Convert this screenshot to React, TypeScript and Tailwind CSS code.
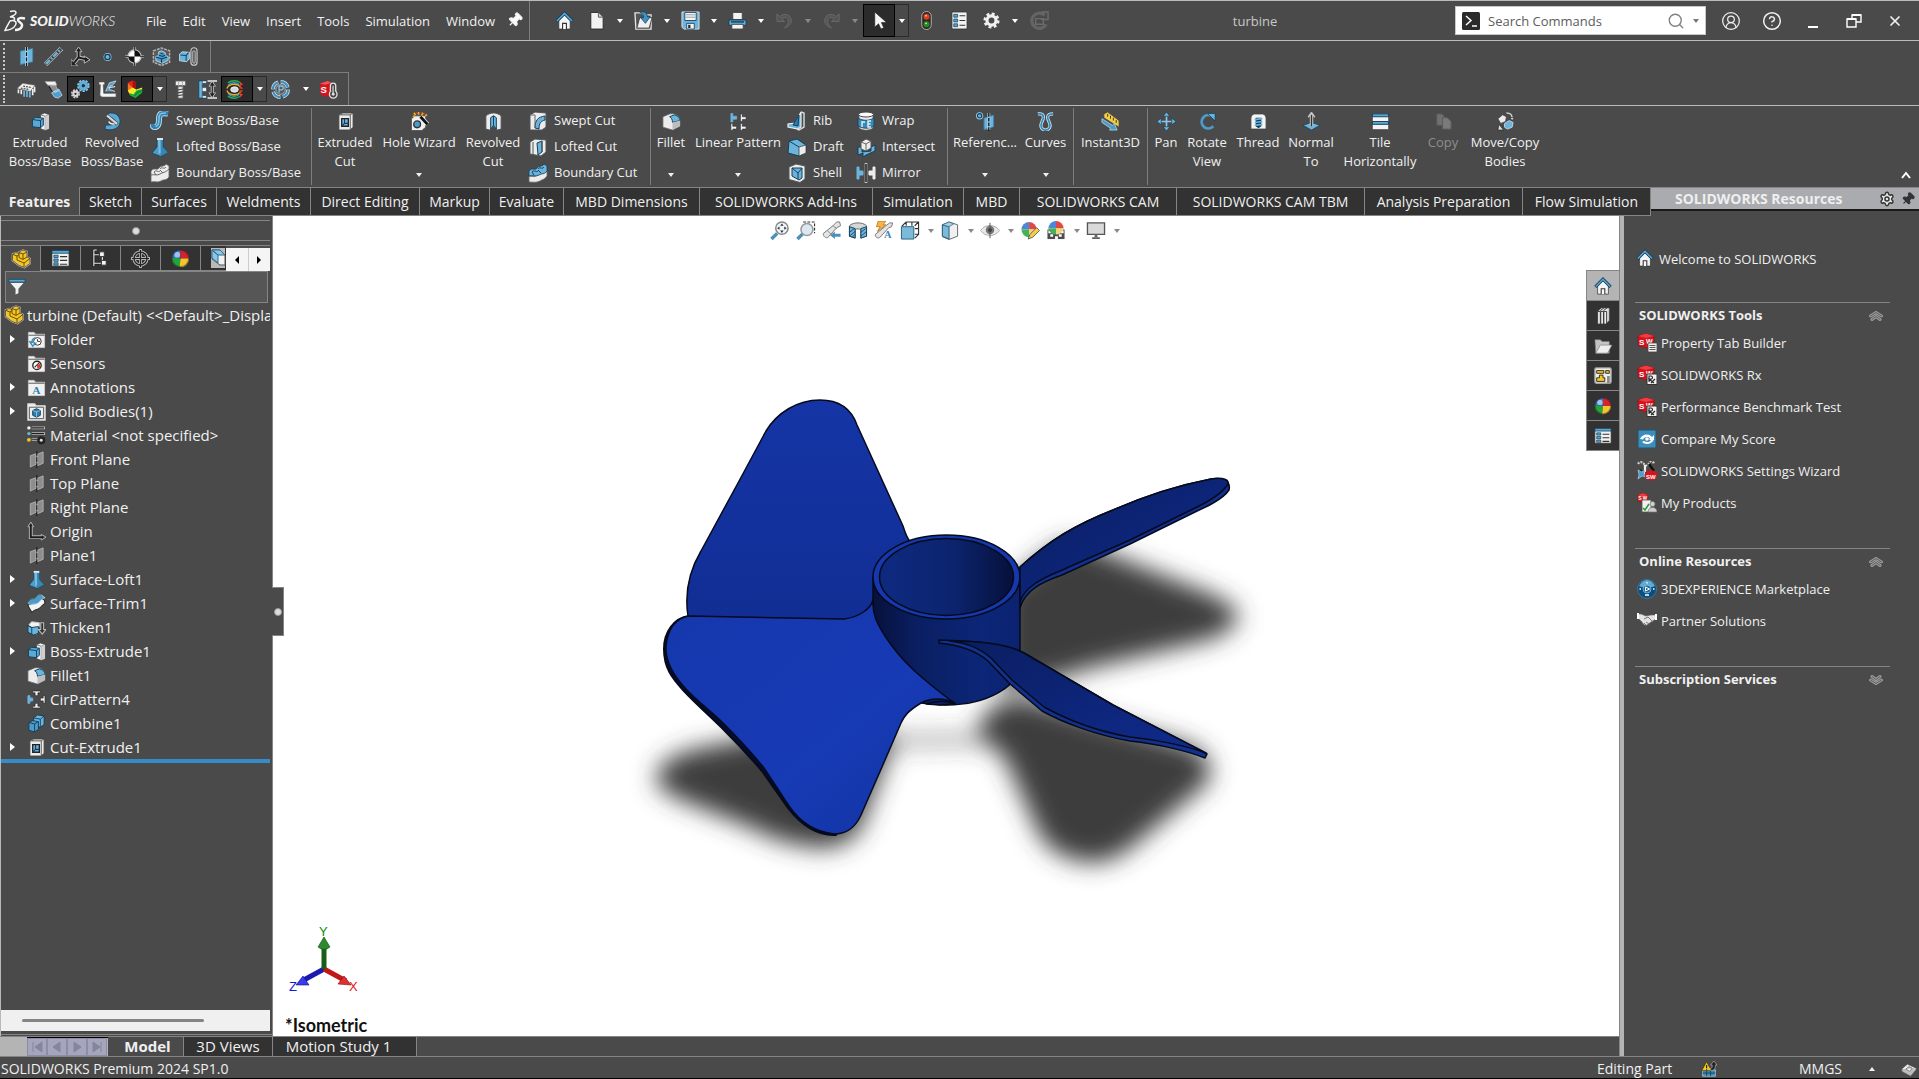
import React, { useState } from 'react';
import { clsx } from 'clsx';
import { Pin, Settings, Search, CircleUserRound, CircleHelp, X } from 'lucide-react';

const B = '#6db4dc';
const D = '#1d5b82';
const W = '#ececec';

/* Small drawings, all on a 20 x 20 grid */
const icons: Record<string, React.ReactNode> = {
  home: (
    <>
      <path d="M4 10v9h12v-9l-6-6z" fill="#f4f4f4" stroke="#333" strokeWidth=".8" />
      <path d="M8 19v-6h4v6" fill="#fff" stroke="#333" strokeWidth="1.2" />
      <path d="M1.5 11 10 2.5l8.500 8.500" fill="none" stroke="#123f5c" strokeWidth="3.400" />
      <path d="M2 10.500 10 2.500l8 8" fill="none" stroke="#5fa8d3" strokeWidth="1.600" />
    </>
  ),
  newDoc: (
    <>
      <path d="M4 1.500h8l5 5V19H4z" fill="#f2f2f2" stroke="#2b2b2b" />
      <path d="M12 1.500v5h5" fill="#cfcfcf" stroke="#555" />
    </>
  ),
  open: (
    <>
      <path d="M1 2h7l2 2h8v15H2z" fill="#555" stroke="#e4e4e4" strokeWidth="1.400" />
      <path d="m3 18 3-11h13l-3 11z" fill="#f0f0f0" stroke="#444" />
      <path d="M6 1c5-1 8 1 8 5h3l-5 7-5-6h3c0-3-1-4-4-6z" fill="#3f93c1" stroke="#123f5c" strokeWidth=".8" />
    </>
  ),
  save: (
    <>
      <path d="M1 1h18v18H3l-2-2z" fill="#6db4dc" stroke="#e0e0e0" />
      <path d="M4 1.500h12V10H4z" fill="#f4f4f4" stroke="#1d4f70" />
      <path d="M5 4h10M5 6.500h10" stroke="#999" />
      <path d="M6 13h8v6H6z" fill="#f4f4f4" stroke="#1d4f70" />
      <path d="M7.500 14.500h2.500V18H7.500z" fill="#333" />
    </>
  ),
  print: (
    <>
      <path d="M5 1.500h10V9H5z" fill="#f4f4f4" stroke="#444" />
      <path d="M1 9.500h18V15H1z" fill="#69b1da" stroke="#123f5c" />
      <path d="M3 11.500h14" stroke="#123f5c" strokeWidth="1.500" />
      <path d="M4 14h12v5H4z" fill="#f4f4f4" stroke="#444" />
    </>
  ),
  undo: <path d="M2 3v8h8L7 8c4-3 8 0 7 4-.3 2-2 4-4 6 5-2 8-5 7-9C16 3 9 2 5 6z" fill="#555" stroke="#6d6d6d" strokeWidth=".9" />,
  redo: <path d="M18 3v8h-8l3-3c-4-3-8 0-7 4 .3 2 2 4 4 6-5-2-8-5-7-9C4 3 11 2 15 6z" fill="#555" stroke="#6d6d6d" strokeWidth=".9" />,
  cursor: <path d="M5 1v16l4-3.500 2.500 5.500 3-1.300-2.500-5.500h5.500z" fill="#f7f7f7" stroke="#222" strokeWidth=".7" />,
  traffic: (
    <>
      <rect x="5" y="0.500" width="10" height="19" rx="5" fill="#2a2a2a" stroke="#b5b5b5" />
      <circle cx="10" cy="6" r="3.200" fill="#e23b1a" />
      <circle cx="9.500" cy="5" r="1" fill="#ffb9a5" />
      <circle cx="10" cy="14" r="3.200" fill="#2b8a1d" />
      <circle cx="9.500" cy="13" r="1" fill="#b8ec9f" />
    </>
  ),
  list: (
    <>
      <path d="M2 1h16v18H2z" fill="#f2f2f2" stroke="#333" />
      <path d="M4 3.500h4v3H4zM4 8.500h4v3H4zM4 13.500h4v3H4z" fill="#5aa6d0" stroke="#123f5c" strokeWidth=".8" />
      <path d="M10 5h6M10 10h6M10 15h6" stroke="#333" strokeWidth="1.200" />
    </>
  ),
  props: (
    <>
      <path d="M1 3h18v15H1z" fill="#f2f2f2" stroke="#333" strokeWidth=".8" />
      <path d="M1 1.500h18v3H1z" fill="#5aa6d0" stroke="#123f5c" strokeWidth=".8" />
      <path d="M3 6.500h4.500v2.500H3zM3 10.500h4.500V13H3zM3 14.500h4.500V17H3z" fill="#5aa6d0" stroke="#123f5c" strokeWidth=".8" />
      <path d="M9.500 8H17M9.500 12H17M9.500 16H17" stroke="#333" strokeWidth="1.200" />
    </>
  ),
  gear: (
    <>
      <circle cx="10" cy="10" r="7" fill="none" stroke="#f0f0f0" strokeWidth="3" strokeDasharray="3 2.500" />
      <circle cx="10" cy="10" r="4.800" fill="none" stroke="#f0f0f0" strokeWidth="3.400" />
    </>
  ),
  rebuild: (
    <>
      <path d="M15.500 4.500A8 8 0 1 0 17 14" fill="none" stroke="#646464" strokeWidth="3.500" />
      <path d="M12 1h7v8h-7M6 8h8v6H6z" fill="none" stroke="#6b6b6b" strokeWidth="1.500" />
    </>
  ),
  plane: (
    <>
      <path d="M3.500 4.500 16.500 1.500v14l-13 3z" fill={B} stroke="#3d88b3" strokeWidth=".8" />
      <path d="M10 0v20" stroke="#9bd0ea" strokeWidth="3" />
      <path d="M10 0v20" stroke="#111" strokeWidth="1.200" strokeDasharray="4 1.500" />
    </>
  ),
  planeGray: (
    <>
      <path d="M3.500 6 9.500 4v11l-6 3zM11 4.500l6-2.500v12l-6 2.500z" fill="#8d8d8d" stroke="#c0c0c0" strokeWidth=".8" />
      <path d="M10.300 1v18" stroke="#222" strokeWidth="1.200" strokeDasharray="5 1.500" />
    </>
  ),
  axis: (
    <>
      <path d="M1.500 18.500 18.500 1.500" stroke="#bdbdbd" strokeWidth="5" />
      <path d="M1.500 18.500 18.500 1.500" stroke="#3b3b3b" strokeWidth="3.400" />
      <path d="M2 18 18 2" stroke={B} strokeWidth="2.400" strokeDasharray="6 1.500 2 1.500" />
    </>
  ),
  csys: (
    <>
      <path d="M8 2v9l9 2M8 11l-5 6" fill="none" stroke="#bdbdbd" strokeWidth="4" />
      <path d="m4.500 5 3.500-5 3.500 5zM14 9.500 20 13.500l-6 3.500zM0 13v7h7z" fill="#222" stroke="#bdbdbd" strokeWidth="1" />
      <path d="M8 3v8l8 2M8 11l-5 6" fill="none" stroke="#1b1b1b" strokeWidth="2" />
    </>
  ),
  point: (
    <>
      <circle cx="10" cy="10.500" r="3.300" fill={B} stroke="#9bd0ea" strokeWidth="1.800" />
      <circle cx="10" cy="10.500" r="2.800" fill={B} stroke="#103a54" strokeWidth="1.400" />
    </>
  ),
  com: (
    <>
      <path d="M10 0v20M0 10h20" stroke="#c4c4c4" strokeWidth="2.200" />
      <circle cx="10" cy="10" r="6.800" fill="#fff" stroke="#c4c4c4" strokeWidth="1.500" />
      <path d="M10 10V3.500A6.500 6.500 0 0 1 16.500 10zM10 10v6.500A6.500 6.500 0 0 1 3.500 10z" fill="#111" />
      <path d="M10 0v4M10 16v4M0 10h4M16 10h4" stroke="#222" strokeWidth=".9" />
    </>
  ),
  bbox: (
    <>
      <path d="M1.500 4 10 1l8.500 3v12L10 19.500 1.500 16z" fill="#5a5a5a" stroke="#b5b5b5" strokeWidth="1.500" strokeDasharray="3 1" />
      <path d="m4 10 3-1V5l3-1 4 2v3l3 1v4l-6 3-7-2.500z" fill="#4fa0cc" stroke="#cfe6f3" strokeWidth=".8" />
      <path d="m4 10.500 6 2v4M10 12.500l6-2M7 8.500l4 1.500 3-1.500M9 6.500l3 1" fill="none" stroke="#103a54" strokeWidth="1.100" />
    </>
  ),
  mate: (
    <>
      <path d="m.500 7.500 3-2.500 7.500.500v7L8 15.500l-7.500-1z" fill={B} stroke="#cfe6f3" strokeWidth=".8" />
      <path d="m1.500 8.500 6 .5L10 6M7.500 9v5.500" fill="none" stroke="#123f5c" strokeWidth="1.100" />
      <rect x="12.500" y=".8" width="6.500" height="18.400" rx="3.200" fill="none" stroke="#c8c8c8" strokeWidth="1.200" />
      <rect x="14.500" y="4" width="2.500" height="13" rx="1.200" fill="none" stroke="#c8c8c8" strokeWidth="1" />
    </>
  ),
  comb: (
    <>
      <path d="m0 9 6-5.500L19 5v6l-2 5-4 2-10-3z" fill="#4a4a4a" />
      <path d="m0 9 6-5.500L19 5.500 14 12z" fill="#f0f0f0" stroke="#666" strokeWidth=".6" />
      <path d="m4 8.500 9 1.500M6.500 6.500l9 1.500" stroke="#555" strokeWidth="1.400" strokeDasharray="2 1" />
      <path d="M1.500 10v4M4.500 10.500v4.500M16.500 9.500V16M18.500 7v6" stroke="#f0f0f0" strokeWidth="1.700" />
      <path d="M7.500 11v6.500M10.500 11.500V18M13.500 12v6.500" stroke={B} strokeWidth="1.800" />
    </>
  ),
  drill: (
    <>
      <path d="M1 1.500h11l1.500 4H4z" fill="#f1f1f1" stroke="#999" strokeWidth=".6" />
      <path d="m5 6.500 7-1 2.500 5L9 13z" fill="#8d8d8d" stroke="#ccc" strokeWidth=".7" />
      <path d="M5 6.500 9 13" stroke="#222" strokeWidth="1.500" />
      <path d="m8 13.500 7.500-4L19 16l-4 3-4-1z" fill="#4d9fcd" stroke="#cde3f0" strokeWidth=".8" />
      <path d="m11 13 5-2" stroke="#a9d7ee" strokeWidth="1.200" />
    </>
  ),
  cogs: (
    <>
      <circle cx="13" cy="6" r="5.700" fill="none" stroke="#8cc6e6" strokeWidth="1.800" strokeDasharray="2.400 1.180" />
      <circle cx="13" cy="6" r="3.500" fill="none" stroke="#5fb0dc" strokeWidth="3.600" />
      <circle cx="4.700" cy="14.500" r="4" fill="none" stroke="#d9d9d9" strokeWidth="1.500" strokeDasharray="2 1.140" />
      <circle cx="4.700" cy="14.500" r="2.300" fill="none" stroke="#d9d9d9" strokeWidth="2.200" />
    </>
  ),
  bracket: (
    <>
      <path d="M1 2h6v3H5.500l.5 9H19v4H4L2 16 2.500 5H1z" fill="#f4f4f4" stroke="#555" strokeWidth=".7" />
      <path d="m8 12 4-9 7-2-4 5h-2l-1 4 6 2" fill="#4d9fcd" stroke="#d5e8f3" strokeWidth=".8" />
      <path d="m11 8 7-1" stroke="#ddd" strokeWidth="1.200" />
    </>
  ),
  rainbow: (
    <>
      <path d="m3 3 5-2.500 3.500 1.500v6l-4 2-4.500-.5z" fill="#e8261c" />
      <path d="M3 3.500v7l1 3L8 11V8z" fill="#f7751c" />
      <path d="m8 1 3.500 1v6L8 10z" fill="#a80f12" />
      <path d="m3 11 5-3 4 2 6-2v4l-7 5-6-2z" fill="#fce72b" />
      <path d="m5 14 4 1 3-4 6-1.500v4L11 19l-6-3z" fill="#19b32c" />
      <path d="m10 17 3-4 5-2" fill="none" stroke="#0c7a58" strokeWidth="1.200" />
    </>
  ),
  bolt: (
    <>
      <path d="M4.500 1h11v5h-11z" fill="#f0f0f0" stroke="#555" />
      <path d="M8 1v5M12 1v5" stroke="#aaa" />
      <path d="M7.500 7h5v12h-5z" fill="#e8e8e8" stroke="#777" strokeWidth=".8" />
      <path d="m7 10.500 6-1M7 13.500l6-1M7 16.500l6-1" stroke="#444" strokeWidth="1.200" />
    </>
  ),
  dims: (
    <>
      <path d="M1 1h8v2.500H4.500V8H9v4H4.500v4.500H9V19H1z" fill="#f4f4f4" stroke="#123f5c" strokeWidth=".6" />
      <path d="M1 1h3.500v18H1z" fill={B} stroke="#123f5c" strokeWidth=".6" />
      <path d="M10 1h10M10 19h10" stroke="#c4c4c4" strokeWidth="2" />
      <path d="M15 2v16" stroke="#c4c4c4" strokeWidth="3.200" />
      <path d="m11.500 6.500 3.500-5 3.500 5zM11.500 13.500l3.500 5 3.500-5z" fill="#222" stroke="#c4c4c4" strokeWidth=".9" />
      <path d="M15 3v14" stroke="#222" strokeWidth="1.300" />
    </>
  ),
  flow: (
    <g fill="none" strokeWidth="1.400">
      <ellipse cx="10" cy="10" rx="4" ry="2.800" fill="#d9d9d9" stroke="#f2f2f2" strokeWidth="1" />
      <path d="M3 3c4-3 10-3 13 0" stroke="#2bb24a" />
      <path d="M3 6c3-4 9-4 12-1" stroke="#3a90d9" />
      <path d="M2 9c2-5 10-6 14-2" stroke="#e9b21c" />
      <path d="M3 17c4 3 10 3 13 0" stroke="#2bb24a" />
      <path d="M3 14c3 4 9 4 12 1" stroke="#3a90d9" />
      <path d="M2 11c2 5 10 6 14 2" stroke="#e9b21c" />
      <path d="M16 1.500 19 5l-3.500 1zM16 18.500l3-3.500-3.500-1zM16 5.500l3 4-4-.5zM16 14.500l3-4-4 .5z" fill="#e5401e" stroke="none" />
    </g>
  ),
  plm: (
    <>
      <circle cx="10" cy="10" r="8" fill="none" stroke="#cfe3ef" strokeWidth="3.800" strokeDasharray="10 2.560" />
      <circle cx="10" cy="10" r="8" fill="none" stroke="#3f8fbf" strokeWidth="2.200" strokeDasharray="10 2.560" />
      <path d="M10 10m-5 0a5 5 0 1 0 10 0a5 5 0 1 0-10 0" fill="#5a5a5a" stroke="#b9d7e8" strokeWidth=".8" />
      <path d="M8.500 13.500v-7h2.500a1.800 1.800 0 0 1 0 3.800H8.500" fill="none" stroke="#8cc6e6" strokeWidth="1.300" />
    </>
  ),
  swPump: (
    <>
      <path d="m1 4 8-3 4 2v13l-5 2-7-3z" fill="#d3141c" />
      <path d="m1 4 8-3 4 2-6 2z" fill="#f0555b" />
      <text x="1.500" y="13.500" fontSize="10" fontWeight="bold" fill="#fff" fontFamily="Liberation Sans">S</text>
      <circle cx="15" cy="15" r="4" fill="#444" stroke="#e2e2e2" strokeWidth="1.400" />
      <path d="M12 12V6a2.800 2.800 0 0 1 5.600 0v6" fill="#444" stroke="#e2e2e2" strokeWidth="1.400" />
      <path d="M14.800 6v9" stroke="#e2e2e2" strokeWidth="1.200" />
      <circle cx="15" cy="15" r="1.500" fill="#e2e2e2" />
    </>
  ),
  extrude: (
    <>
      <path d="m10 3 4-2 5 1.500v15l-4 2-5-2z" fill="#f6f6f6" stroke="#444" strokeWidth=".8" />
      <path d="M15 4.500v14.500M10 3l5 1.500 4-2" fill="none" stroke="#555" strokeWidth=".8" />
      <path d="M15 4.500 19 2.500v15l-4 1.500z" fill="#cfcfcf" />
      <path d="m1.500 8 3.500-2.500 8 1V14l-3 2.500-8.500-1z" fill="#5ba8d2" stroke="#123f5c" />
      <path d="m1.500 8 8.500 1 3-2.500M10 9v7.500" fill="none" stroke="#123f5c" />
    </>
  ),
  revolve: (
    <>
      <path d="M5 1.500c7-2 13 2 13 8.500 0 7-8 10.500-16 8 0-2 .5-3 1.500-4.500 5 1 9-.5 9-3.500 0-2.500-3-4.500-7-4z" fill="#5ba8d2" stroke="#123f5c" strokeWidth=".9" />
      <path d="M3 4.500 5 2.500l11 9-2 2.500z" fill="#d6d6d6" stroke="#444" strokeWidth=".8" />
      <path d="M6 10c1 2 3 3 6 2.500" fill="none" stroke="#eee" strokeWidth="1.600" />
    </>
  ),
  sweep: (
    <>
      <path d="M18 2.500c-7-1-9 0-9 6 0 5-1 7-3.500 7.500-2 .3-3-1-3-3" fill="none" stroke="#bfe0f1" strokeWidth="6" />
      <path d="M18 2.500c-7-1-9 0-9 6 0 5-1 7-3.500 7.500-2 .3-3-1-3-3" fill="none" stroke="#2f81b0" strokeWidth="4.200" />
      <path d="M16 2c-6 0-7 1-7 6 0 5-1 7-3.500 7.500" fill="none" stroke="#7fc0e2" strokeWidth="1.600" />
    </>
  ),
  loft: (
    <>
      <path d="M7 2h6v8l5 5.500L10.500 19.500 2 16l5-6z" fill="#4b9cc9" stroke="#123f5c" strokeWidth=".8" />
      <path d="M13 3v7l5 5.500L10.500 19.500V3z" fill="#2f7fae" opacity=".7" />
      <path d="M8 3h2.500l.2 13-2 1z" fill="#86c3e3" opacity=".8" />
      <path d="M7 1h6v2H7z" fill="#e4e4e4" />
    </>
  ),
  boundary: (
    <>
      <path d="M1 8c3-4 6 0 8-3s6-1 7-4l3 2v11c-3 4-5 2-8 4-4 2-6 0-10 1z" fill={W} stroke="#666" strokeWidth=".8" />
      <path d="M1 12c4-1 6 1 9-1s5-1 9-5M4 9c2-3 4 1 6-1M10 6c2-3 4 1 6-2M6 12l-2-3M13 10l-3-3" fill="none" stroke="#666" strokeWidth="1" />
    </>
  ),
  boundaryCut: (
    <>
      <path d="M1 13c3 0 6 1 9-1s6-2 9-4v5c-3 4-4 3-7 5-4 2-7 1-11 1z" fill={W} stroke="#666" strokeWidth=".8" />
      <path d="M1 8c3-4 6 0 8-3s6-1 7-4l3 2v5c-3 4-5 2-8 4-4 2-6 0-10 1z" fill={B} stroke="#123f5c" strokeWidth=".8" />
      <path d="M4 9c2-3 4 1 6-1M10 6c2-3 4 1 6-2M6 12l-2-3M13 10l-3-3" stroke="#123f5c" fill="none" />
    </>
  ),
  extrudeCut: (
    <>
      <path d="m3 3 3-2h12v15l-3 3H3z" fill={W} stroke="#444" />
      <path d="M6 1v2M15 3l3-2M3 3h12v16" fill="none" stroke="#555" />
      <path d="M6 7h7v8H6z" fill={B} stroke="#222" strokeWidth="1.400" />
      <path d="m6 15 3-3h4M9 7v5" fill="none" stroke="#123f5c" strokeWidth="1.200" />
    </>
  ),
  holeWizard: (
    <>
      <path d="m1.500 7 4-3h11v12l-4 3.500h-11z" fill="#f1f1f1" stroke="#555" />
      <circle cx="7.500" cy="13" r="3.600" fill="#4b9cc9" stroke="#333" strokeWidth="1.400" />
      <path d="m11 5 7.500 8" stroke="#eee" strokeWidth="4.400" />
      <path d="m11 5 7.500 8" stroke="#111" strokeWidth="3" />
      <path d="m4 1 2 2M9 0v3M14 1l-2 2M18 3l-2 1M3 5l2-1" stroke="#f5b11c" strokeWidth="1.800" />
      <path d="M6 1h2M11 1h2M16 1v2" stroke="#e5401e" strokeWidth="1.200" />
    </>
  ),
  revolveCut: (
    <>
      <path d="M2 4c5-4 11-4 16 0v14l-4 1-4-4-4 4-4-1z" fill={W} stroke="#555" />
      <path d="m7 6 3-2 3 2v12l-3-4-3 4z" fill={B} stroke="#123f5c" />
      <path d="M10 4v10" stroke="#123f5c" />
    </>
  ),
  sweepCut: (
    <>
      <path d="m2 4 5-3 11 1v14l-4 3H2z" fill={W} stroke="#555" />
      <path d="M7 17C7 9 10 6 17 5v4c-4 1-6 3-6 9z" fill={B} stroke="#123f5c" />
      <path d="M2 4h5v13" stroke="#666" fill="none" />
    </>
  ),
  loftCut: (
    <>
      <path d="m2 5 5-3 11 1v12l-5 4-11-2z" fill={W} stroke="#555" />
      <path d="m9 6 5-2v11l-4 3z" fill={B} stroke="#123f5c" />
      <path d="M5 5v12M14 4v11" stroke="#555" />
    </>
  ),
  fillet: (
    <>
      <path d="m1 5 7-3c6-1 10 2 11 6v7l-8 4-10-3z" fill={W} stroke="#666" strokeWidth=".8" />
      <path d="m8 5 5-2c4 1 6 3 6 6l-8 2c0-3-1-5-3-6z" fill={B} stroke="#123f5c" />
      <path d="m11 11v8l8-4V9z" fill="#bdbdbd" />
    </>
  ),
  pattern: (
    <>
      <path d="M2 1.500h2v3h4v3H4v3H2z" fill={B} stroke="#6db4dc" strokeWidth=".8" />
      <path d="M12 2h2v3h4v3h-4v2h-2zM2 12h2v3h4v3H4v1.500H2zM12 12h2v3h4v3h-4v1.500h-2z" fill="#f4f4f4" stroke="#333" strokeWidth=".7" />
    </>
  ),
  rib: (
    <>
      <path d="M14 1v15l-3 2L1 16v-3l7-1z" fill={B} stroke="#eee" strokeWidth="1.200" />
      <path d="m12 4-6 10 5 1z" fill="#2a7ba9" stroke="#123f5c" />
      <path d="M14 1l3 1v14l-5 3-2-1" fill="none" stroke="#ddd" strokeWidth="1.400" />
    </>
  ),
  draft: (
    <>
      <path d="m2 4 8-2 9 6v8l-7 3-11-3z" fill={B} stroke="#123f5c" />
      <path d="m12 10 7-2v8l-7 3z" fill={W} stroke="#444" strokeWidth=".8" />
      <path d="m2 4 10 6" stroke="#123f5c" />
    </>
  ),
  shell: (
    <>
      <path d="m2 4 7-3 9 2v13l-5 3.500-11-3z" fill={W} stroke="#555" />
      <path d="m5 5 10 0v10l-3 2-7-4z" fill={B} stroke="#123f5c" />
      <path d="m5 5 6 5 4-5M11 10v6" fill="none" stroke="#123f5c" />
    </>
  ),
  wrap: (
    <>
      <path d="M3 4v13c4 3 10 3 14 0V4z" fill={W} stroke="#555" strokeWidth=".8" />
      <path d="M2 7c5 3 11 3 16 0v8c-5 3-11 3-16 0z" fill="#3a8ab8" stroke="#123f5c" strokeWidth=".8" />
      <ellipse cx="10" cy="3.500" rx="7.500" ry="2.500" fill="#fff" stroke="#444" />
      <path d="M9 11H6v5M15 10h-3v6h3M12 13h2.500" fill="none" stroke="#e4f1f8" strokeWidth="1.400" />
    </>
  ),
  intersect: (
    <>
      <path d="M2 10h4v5l9-1v-4l4-2v6l-9 4-3 2v-4l-5 2z" fill={B} stroke="#123f5c" />
      <path d="m5 5 5-3 5 2v7l-5 3-5-2z" fill={W} stroke="#555" />
      <path d="m5 5 5 2 5-3M10 7v7" fill="none" stroke="#666" />
    </>
  ),
  mirror: (
    <>
      <path d="M1 4h2v4h4v4H3v4H1z" fill={B} stroke="#6db4dc" />
      <path d="M19 4h-2v4h-4v4h4v4h2z" fill={W} stroke="#eee" />
      <path d="M10 0v20" stroke="#c9c9c9" strokeWidth="2.600" />
      <path d="M10 1v18" stroke="#111" strokeWidth="1.400" />
    </>
  ),
  refGeo: (
    <>
      <path d="M8.500 6.500 18.500 3.500v12l-10 3z" fill={B} stroke="#3d88b3" />
      <path d="M13.500 1v18" stroke="#a9d7ee" strokeWidth="3" />
      <path d="M13.500 1v19" stroke="#111" strokeWidth="1.400" strokeDasharray="4 1" />
      <circle cx="3.800" cy="4" r="2.800" fill={B} stroke="#9bd0ea" strokeWidth="2" />
      <circle cx="3.800" cy="4" r="2.300" fill={B} stroke="#123f5c" strokeWidth="1.200" />
    </>
  ),
  curves: (
    <>
      <path d="M2 2c8-1 6 5 4 9s0 8 4 8 6-4 4-8-4-9 4-9" fill="none" stroke="#cfe6f3" strokeWidth="3.400" />
      <path d="M2 2c8-1 6 5 4 9s0 8 4 8 6-4 4-8-4-9 4-9" fill="none" stroke="#3a8ab8" strokeWidth="1.800" />
    </>
  ),
  instant: (
    <>
      <path d="m3 2 4-2 12 9v7l-5-3L3 6z" fill="#f5cd45" stroke="#444" strokeWidth=".8" />
      <path d="m7 2 0 3M10 4v3M13 6v3M16 8.500v3" stroke="#333" />
      <path d="m1 7 11 7 2-2 3 7-8 0 1-2L1 11z" fill="#4b9cc9" stroke="#bcd9e8" strokeWidth=".8" />
    </>
  ),
  pan: (
    <>
      <path d="M10 3v14M3 10h14" stroke="#8cc6e6" strokeWidth="1.800" />
      <path d="m6.500 4.500 3.500-4.500 3.500 4.500zM6.500 15.500 10 20l3.500-4.500zM4.500 6.500 0 10l4.500 3.500zM15.500 6.500 20 10l-4.500 3.500z" fill="#6db4dc" stroke="#123f5c" strokeWidth=".7" />
    </>
  ),
  rotate: (
    <>
      <path d="M14 4A7 7 0 1 0 16 15" fill="none" stroke="#4b9cc9" strokeWidth="3" />
      <path d="M10 1.500h8v8z" fill={B} stroke="#123f5c" strokeWidth=".8" />
    </>
  ),
  thread: (
    <>
      <path d="M2 7c0-4 3-5 4-5h8c1 0 4 1 4 5v11H2z" fill="#f4f4f4" stroke="#444" />
      <path d="M7 6h6v9l-3 2-3-2z" fill="#123f5c" />
      <path d="m6 8 8-1M6 11l8-1M6 14l8-1" stroke={B} strokeWidth="1.700" />
    </>
  ),
  normal: (
    <>
      <path d="m1 14 9-3 9 3-9 5z" fill={B} stroke="#123f5c" strokeWidth=".8" />
      <path d="M10 2v13" stroke="#c4c4c4" strokeWidth="3.600" />
      <path d="M10 3v12" stroke="#333" strokeWidth="1.400" />
      <path d="m6.500 5.500 3.500-5 3.500 5" fill="none" stroke="#c4c4c4" strokeWidth="1.500" />
    </>
  ),
  tile: (
    <>
      <path d="M1.500 1.500h17v17h-17z" fill="#f4f4f4" stroke="#333" strokeWidth=".6" />
      <path d="M1.500 2h17v3h-17zM1.500 10h17v3h-17z" fill="#5aa6d0" stroke="#123f5c" />
    </>
  ),
  copy: (
    <>
      <path d="M3 2h5l3 3v9H3z" fill="#707070" stroke="#5b5b5b" />
      <path d="M9 6h5l4 4v8H9z" fill="#7a7a7a" stroke="#5b5b5b" />
    </>
  ),
  move: (
    <>
      <path d="m2 7 5-4 4 2-1 5-5 2z" fill={W} stroke="#444" strokeWidth=".8" />
      <path d="m9 12 5-3 4 2-1 5-5 2-3-2z" fill={B} stroke="#cfe6f3" strokeWidth=".8" />
      <path d="M11 1c5 0 6 2 6 6" fill="none" stroke="#cfcfcf" strokeWidth="1.600" />
      <path d="m14.500 6 2.500 3 2.500-3zM3 13l5 6H2z" fill="#ddd" stroke="#222" strokeWidth=".7" />
    </>
  ),
  zoomFit: (
    <>
      <path d="m1 19 6-6" stroke="#4a90b8" strokeWidth="3.600" />
      <circle cx="12" cy="7.500" r="6.500" fill="#eef5f9" stroke="#8a8a8a" strokeWidth="1.600" />
      <path d="m12 2.500 1.800 2.500h-3.600zM12 12.500l1.800-2.500h-3.600zM7 7.500l2.500-1.800v3.600zM17 7.500l-2.500-1.800v3.600z" fill="#333" />
    </>
  ),
  zoomArea: (
    <>
      <path d="M7 1h12v12" fill="none" stroke="#333" strokeWidth="1.200" strokeDasharray="3 1.500" />
      <path d="m1 19 6-6" stroke="#4a90b8" strokeWidth="3.600" />
      <circle cx="11" cy="9" r="6.300" fill="#dbe8ef" stroke="#999" strokeWidth="1.600" />
    </>
  ),
  prevView: (
    <>
      <path d="m1 13 10-8 4-4 3 0 1 4-4 2-9 10c-2 2-6-1-5-4z" fill="#e4e4e4" stroke="#777" />
      <path d="m11 5 4 3M5 10l4 4" stroke="#888" />
      <path d="m8 15 5-4v2.500h6v3h-6V19z" fill="#4a90b8" />
    </>
  ),
  section: (
    <>
      <path d="M1 5c4-4 14-4 18 0v11l-6 2V9c-2-1-4-1-6 0v9l-6-2z" fill="#d7d7d7" stroke="#666" />
      <path d="M1 6l6 2v10l-6-2zM19 6l-6 2v10l6-2z" fill={B} stroke="#123f5c" />
      <path d="m1 12 5-4M1 16l6-5M4 17l3-3M13 12l5-4M13 16l6-5" stroke="#123f5c" strokeWidth=".9" />
    </>
  ),
  annoView: (
    <>
      <path d="M4 0h8L9 4h3L3 11l3-5H2z" fill="#f7b64a" stroke="#b96d12" strokeWidth=".8" />
      <path d="m1 14 11-9 4-3h3l-1 4-3 1-9 10c-2 2-6 0-5-3z" fill="#e4e4e4" stroke="#777" />
      <text x="10" y="18" fontSize="11" fontWeight="bold" fill="#3f86ac" fontFamily="Liberation Serif">A</text>
    </>
  ),
  orient: (
    <>
      <path d="M6 1h13v13h-4M6 1v4M1.500 5.500 6 1M15 5l4-4M15 18l4-4M12 1v4M15 8h4" fill="none" stroke="#333" strokeWidth="1.200" />
      <path d="M1 6h13v13H1z" fill="#7db9d8" stroke="#2b5f7d" />
    </>
  ),
  display: (
    <>
      <path d="m2 4 7-3 9 3v12l-9 3.500-7-3z" fill="#f0f0f0" stroke="#666" />
      <path d="m2 4 7 2v13l-7-3z" fill="#7db9d8" stroke="#2b5f7d" />
      <path d="m2 4 7-3 5 2-5 3z" fill="#a6d0e5" stroke="#2b5f7d" strokeWidth=".7" />
    </>
  ),
  eye: (
    <>
      <path d="M0 10c5-7 15-7 20 0-5 7-15 7-20 0z" fill="#e9e9e9" stroke="#999" strokeWidth=".8" />
      <circle cx="10" cy="9.500" r="4.500" fill="#777" />
      <circle cx="10" cy="9.500" r="2" fill="#333" />
      <path d="M10 2v16" stroke="#555" />
    </>
  ),
  ballPencil: (
    <>
      <path d="M9 9V1a8 8 0 0 0-8 8z" fill="#4f87d8" />
      <path d="M9 9V1a8 8 0 0 1 8 8z" fill="#dd4a44" />
      <path d="M9 9H1a8 8 0 0 0 8 8z" fill="#46b254" />
      <path d="M9 9h8a8 8 0 0 1-8 8z" fill="#efd67c" />
      <path d="m8 19 2-5 7-7 3 3-7 7z" fill="#f6ce4f" stroke="#444" strokeWidth=".8" />
    </>
  ),
  ballScene: (
    <>
      <path d="M1 9h18v10H1z" fill="#4d4d4d" />
      <path d="M2 10h3v3H2zM9 16h3v3H9zM15 10h3v3h-3zM4 14h3v2.500H4zM13 14h3v2.500h-3z" fill="#fff" />
      <path d="M10 8V0a8 8 0 0 0-8 8z" fill="#4f87d8" />
      <path d="M10 8V0a8 8 0 0 1 8 8z" fill="#dd4a44" />
      <path d="M10 8H2a7 7 0 0 0 8 6z" fill="#46b254" />
      <path d="M10 8h8a7 7 0 0 1-8 6z" fill="#efd67c" />
    </>
  ),
  monitor: (
    <>
      <path d="M1 2h18v12H1z" fill="#d9d9d9" stroke="#555" strokeWidth="1.400" />
      <path d="M8.500 14h3v3h-3z" fill="#666" />
      <path d="M6 18h8" stroke="#444" strokeWidth="1.600" />
    </>
  ),
  part: (
    <>
      <path d="M1.500 5 5 3.500l3 1V3l4-2 4 1.500V8l3 1.500v5L13.500 18.500 8 16.500l-6.500-5z" fill="#f6c620" stroke="#c9c9c9" strokeWidth="1.600" />
      <path d="M1.500 5 5 3.500l3 1V3l4-2 4 1.500V8l3 1.500v5L13.500 18.500 8 16.500l-6.500-5z" fill="none" stroke="#5c4300" strokeWidth=".8" />
      <path d="m2 5.500 4 1.500V11l7 3v4M13 14l6-4.500M6 7l2-1.500M8 4v4.500l4 2L16 8M8 3.500l4 1.500 4-2M12 5v5" fill="none" stroke="#5c4300" strokeWidth=".9" />
    </>
  ),
  tree: (
    <>
      <path d="M3 1v17M3 6h6M3 15h6" fill="none" stroke="#222" strokeWidth="3" />
      <path d="M3 1h3M3 1v17M3 6h6M3 15h8M12 8v4" fill="none" stroke="#e4e4e4" strokeWidth="1.200" />
      <path d="M9 3h5v5H9zM11 12h5v5h-5z" fill="#f4f4f4" stroke="#333" />
    </>
  ),
  target: (
    <>
      <path d="M10 0v20M0 10h20" stroke="#b5b5b5" strokeWidth="3" />
      <circle cx="10" cy="10" r="6.800" fill="none" stroke="#b5b5b5" strokeWidth="3.400" />
      <circle cx="10" cy="10" r="6.800" fill="none" stroke="#222" strokeWidth="1.400" />
      <path d="M10 1v18M1 10h18" stroke="#222" strokeWidth="1.200" />
    </>
  ),
  ball: (
    <>
      <path d="M10 10V1a9 9 0 0 0-9 8z" fill="#2d77d9" />
      <path d="M10 10V1a9 9 0 0 1 9 9z" fill="#d7222a" />
      <path d="M10 10 1 9a9 9 0 0 0 8 10z" fill="#22a63a" />
      <path d="M10 10h9a9 9 0 0 1-10 9z" fill="#f4c52c" />
      <circle cx="6.500" cy="6" r="3" fill="#fff" opacity=".55" />
      <circle cx="10" cy="10" r="8.500" fill="none" stroke="#222" strokeWidth=".8" opacity=".6" />
    </>
  ),
  cam: (
    <>
      <path d="M0 0h14v20H0z" fill="#b9b9b9" />
      <path d="m1 2 8 0 5 5v10l-5 0-8-6z" fill="#f1f1f1" stroke="#555" />
      <path d="m1 2 8 0 5 5H7zM1 2v8l6 5V7z" fill="#8cc6e6" stroke="#2b6d94" />
    </>
  ),
  filter: (
    <>
      <path d="m2 5 6 7v7l4-2v-5l6-7z" fill="#f2f2f2" stroke="#444" strokeWidth=".6" />
      <path d="M1 1.500h18v3H1z" fill="#5aa6d0" stroke="#123f5c" strokeWidth=".8" />
    </>
  ),
  folder: (
    <>
      <path d="M1.500 2.500h6l1.500 2h9.500v14h-17z" fill="#f1f1f1" stroke="#c9c9c9" />
      <path d="M1.500 5.500h17" stroke="#555" />
      <circle cx="11" cy="12" r="4" fill="#fff" stroke="#333" />
      <path d="M11 9.500V12h3" stroke="#333" fill="none" />
      <path d="M9 8c-3 1-4 3-3.500 5L3 12.500 6 17l3-3-2 0" fill="none" stroke="#3a8ab8" strokeWidth="1.500" />
    </>
  ),
  sensors: (
    <>
      <path d="M1.500 2.500h6l1.500 2h9.500v14h-17z" fill="#f1f1f1" stroke="#c9c9c9" />
      <path d="M1.500 5.500h17" stroke="#555" />
      <circle cx="10.500" cy="12" r="4.400" fill="#fff" stroke="#222" strokeWidth="1.400" />
      <path d="M10.500 12 14 10l0 4-3 2z" fill="#e03a2a" />
      <path d="m8 14 5-5" stroke="#333" strokeWidth="1.200" />
    </>
  ),
  annotations: (
    <>
      <path d="M1.500 2.500h6l1.500 2h9.500v14h-17z" fill="#f1f1f1" stroke="#c9c9c9" />
      <path d="M1.500 5.500h17" stroke="#555" />
      <text x="5.500" y="16.500" fontSize="12" fontWeight="bold" fill="#2f7fae" fontFamily="Liberation Serif">A</text>
    </>
  ),
  bodies: (
    <>
      <path d="M1 2h7l1.500 2h9.500v15H1z" fill="#f1f1f1" stroke="#e0e0e0" strokeWidth="1.400" />
      <path d="M2.500 5.500h15v12h-15z" fill="#eee" stroke="#555" />
      <path d="m6 9 4-2 4 2v5l-4 2-4-2z" fill="#2f7fae" stroke="#123f5c" />
      <path d="m6 9 4 1.500L14 9M10 10.500V16" fill="none" stroke="#a4d0e7" strokeWidth=".8" />
    </>
  ),
  material: (
    <>
      <path d="M5 2h14M5 8h14M5 14h8" stroke="#bdbdbd" strokeWidth="3" />
      <path d="M5 2h13M5 8h13M5 14h8" stroke="#222" strokeWidth="1.200" />
      <circle cx="2" cy="2" r="1.800" fill="#f1f1f1" />
      <circle cx="2" cy="8" r="1.800" fill={B} />
      <circle cx="2" cy="14.500" r="2" fill="#f6c620" />
      <circle cx="15" cy="15" r="3" fill="none" stroke="#222" strokeWidth="2.600" />
      <circle cx="15" cy="15" r="1.500" fill="#ddd" />
    </>
  ),
  origin: (
    <>
      <path d="M4 2v14h14" fill="none" stroke="#b5b5b5" strokeWidth="4" />
      <path d="m1 5 3-5 3 5zM15 13l5 3-5 3z" fill="#333" stroke="#b5b5b5" />
      <path d="M4 3v13h13" fill="none" stroke="#1b1b1b" strokeWidth="2" />
    </>
  ),
  trim: (
    <>
      <path d="M1 12c4-3 5 0 9-3s5-5 8-3l1 4c-4 1-4 5-8 6s-4 2-6 3z" fill="#f4f4f4" stroke="#111" strokeWidth=".9" />
      <path d="M1 9c3-6 6-2 8-5s4-4 6-3l4 3c-4 0-4 4-8 6s-4-1-7 2z" fill="#4b9cc9" stroke="#d4e7f2" strokeWidth=".8" />
      <path d="M1 9c3-6 6-2 8-5s4-4 6-3" fill="none" stroke="#123f5c" strokeWidth=".8" />
    </>
  ),
  thicken: (
    <>
      <path d="m2 7 3-3 8 1v3l-3 9-8-3z" fill="#f1f1f1" stroke="#ccc" />
      <path d="m1 8 4 2 7-1v7l-5 2-6-3z" fill={B} stroke="#123f5c" />
      <path d="M5 10v7M1 8l4 2" stroke="#123f5c" />
      <path d="M14.500 5h3v7H20l-4 5-4-5h2.500z" fill="#333" stroke="#bbb" strokeWidth="1.100" />
    </>
  ),
  circ: (
    <>
      <path d="M1 6v8h2v-2.500h3v-3H3V6z" fill={B} stroke="#6db4dc" />
      <path d="M6 1h8v2h-2.500v3h-3V3H6zM6 19h8v-2h-2.500v-3h-3v3H6zM19 6v8h-2v-2.500h-3v-3h3V6z" fill="#f1f1f1" stroke="#222" strokeWidth=".7" />
    </>
  ),
  combine: (
    <>
      <path d="m7 4 4-3 7 1v9l-4 3-7-2z" fill={B} stroke="#123f5c" />
      <path d="m2 9 4-2 6 1v8l-4 3-6-2z" fill="#4b9cc9" stroke="#123f5c" />
      <path d="m2 9 6 1.500L12 8M8 10.500V19M7 4l7 1.500L18 2M14 5.500V14" fill="none" stroke="#123f5c" />
    </>
  ),
  books: (
    <>
      <path d="m4 5 4-4 9 0v14l-4 4H4z" fill="#e0e0e0" stroke="#444" strokeWidth=".7" />
      <path d="M4 5h3v14H4zM7.500 5h3v14h-3zM11 5h3v14h-3z" fill="#f1f1f1" stroke="#333" />
      <path d="m7 4 4-3M10.500 4l4-3" stroke="#333" />
    </>
  ),
  openFolder: (
    <>
      <path d="M1 3h6l2 2h8v13H2z" fill="#c4c4c4" stroke="#777" strokeWidth=".7" />
      <path d="m2 18 5-9h13l-5 9z" fill="#eee" stroke="#777" strokeWidth=".7" />
    </>
  ),
  palette: (
    <>
      <rect x="1" y="1" width="18" height="17" rx="1.500" fill="#eee" stroke="#a5a5a5" strokeWidth="1.500" />
      <path d="M3 4h8v3H3zM13 4h4v3h-4zM6 9h4v3h2v4H3v-4h3z" fill="#f6c620" stroke="#222" />
      <path d="M14.500 10h3v8h-3z" fill="#888" />
    </>
  ),
  swTab: (
    <>
      <path d="M11 10h9v9h-9z" fill="#f1f1f1" stroke="#444" strokeWidth=".8" />
      <path d="M12.500 12.500h6M12.500 14.500h6M12.500 16.500h6" stroke="#444" strokeWidth=".9" />
    </>
  ),
  swRx: (
    <>
      <path d="M10 9h10v10.500H10z" fill="#f1f1f1" stroke="#333" />
      <path d="M12 17v-6h2a1.500 1.500 0 0 1 0 3h-2l5 4M14 18l4-4" fill="none" stroke="#222" strokeWidth="1.100" />
    </>
  ),
  swUser: (
    <>
      <path d="M5 7h9v12H5z" fill="#f1f1f1" stroke="#555" strokeWidth=".8" />
      <path d="m6 15 2 2 4-6" fill="none" stroke="#2b9c34" strokeWidth="1.600" />
      <circle cx="15.500" cy="11" r="2.500" fill="#cfcfcf" stroke="#777" strokeWidth=".7" />
      <path d="M11 19c0-6 9-6 9 0z" fill="#cfcfcf" stroke="#777" strokeWidth=".7" />
    </>
  ),
  wizard: (
    <>
      <path d="M1 3c2-3 5-2 6 0s4 2 5-1 5-1 5 1" fill="none" stroke="#c9c9c9" strokeWidth="2.200" strokeDasharray="2 1" />
      <path d="m3 9 4 6M12 3l5 7" stroke="#111" strokeWidth="2.400" />
      <path d="M8 4v9" stroke="#f1f1f1" strokeWidth="2.200" />
      <path d="m1 9 4 2 3-2-1 4 2 3-4-1-4 3 1-4z" fill="#4b9cc9" stroke="#bfe0f1" strokeWidth=".6" />
      <path d="m8 11 6-2 6 2v6l-6 3-6-3z" fill="#d3141c" />
      <text x="9" y="17.500" fontSize="6" fontWeight="bold" fill="#fff" fontFamily="Liberation Sans">SW</text>
    </>
  ),
  compare: (
    <>
      <rect x="1" y="1" width="18" height="18" rx="1.500" fill="#3d8dbb" stroke="#1f5475" />
      <path d="M3 10c2-5 9-6 12-2l2-2v5h-5l1-1.500c-2-2-5-2-7 1zM17 10c-2 6-9 6-12 3l2-1c3 2 6 1 7-1z" fill="#fff" />
      <circle cx="10" cy="10" r="1.800" fill="#fff" />
    </>
  ),
  compass: (
    <>
      <circle cx="10" cy="10" r="9.500" fill="#0d4f7c" stroke="#3d7fa8" strokeWidth=".8" />
      <path d="M2 7c4-8 12-8 16 0-5 2-11 2-16 0z" fill="#64a9d0" />
      <circle cx="10" cy="10" r="4" fill="#226d9d" stroke="#8cc1df" strokeWidth=".8" />
      <path d="m8.500 8 4 2-4 2z" fill="none" stroke="#fff" />
      <path d="M8 16h4M10 3v1.500M2.500 10H4M16 10h1.500" stroke="#fff" strokeWidth="1.300" />
    </>
  ),
  shake: (
    <>
      <path d="M1 3h3l5 2 5-1 5 0v4l-5 3-4 3c-2 1-4-1-5-3L1 7z" fill="#e3e3e3" stroke="#666" strokeWidth=".6" />
      <path d="m7 8 4-2 5 5M9 11l3 2M7 12l2 2" fill="none" stroke="#777" />
      <path d="M0 2h2v6H0zM18 3h2v6h-2z" fill="#fff" />
    </>
  ),
  warnPart: (
    <>
      <path d="M2 11h16v8H2z" fill="#3a8ab8" stroke="#cfe3ef" strokeWidth=".8" />
      <path d="M7 11v8M12 11v8M2 15h16" stroke="#123f5c" />
      <path d="M7 1 1 12h12z" fill="#f7ca22" stroke="#3d3000" strokeWidth=".8" />
      <path d="M7 5v4M7 10v1" stroke="#222" strokeWidth="1.500" />
      <path d="M12 12c5 0 6-3 6-7h2l-4-5-4 5h2c0 3 0 4-2 4z" fill="#222" stroke="#bbb" strokeWidth=".8" />
    </>
  ),
  tag: (
    <>
      <path d="m1 10 7-6 11 5-7 8z" fill="#f1f1f1" stroke="#555" strokeWidth=".8" />
      <path d="m1 10 0 3 11 6 7-8V9M6 10l4-3 4 2-3 4z" fill="#bdbdbd" stroke="#555" strokeWidth=".8" />
    </>
  ),
};

/* Red SW cube that carries one of the badges */
const badges = ['swTab', 'swRx', 'swUser'];

const SwCube = ({ small }: { small?: boolean }) => (
  <g transform={small ? 'scale(.65)' : undefined}>
    <path d="m1 3 8-2.500L17 3v9.500L9 15l-8-2.500z" fill="#d3141c" stroke="#8c0d12" strokeWidth=".6" />
    <path d="m1 3 8-2.500L17 3l-8 2z" fill="#ef3c43" />
    <text x="2" y="11.500" fontSize="8" fontWeight="bold" fill="#fff" fontFamily="Liberation Sans">S</text>
    <text x="9" y="11" fontSize="7" fontWeight="bold" fill="#fff" fontFamily="Liberation Sans">W</text>
  </g>
);

const Icon = ({ name, className = 'h-5 w-5' }: { name: string; className?: string }) => (
  <svg viewBox="0 0 20 20" className={clsx('shrink-0', className)} aria-hidden="true">
    {badges.includes(name) && <SwCube small={name === 'swUser'} />}
    {icons[name]}
  </svg>
);

const Caret = ({ className = 'text-white' }: { className?: string }) => (
  <svg viewBox="0 0 6 4" className={clsx('h-1 w-1.5 shrink-0', className)} aria-hidden="true">
    <path d="M0 0h6L3 4z" fill="currentColor" />
  </svg>
);

interface ToolProps {
  icon: string;
  cell?: string;
  caret?: string;
  pressed?: boolean;
  dim?: boolean;
}

const Tool = ({ icon, cell = 'w-[27px]', caret, pressed, dim }: ToolProps) => (
  <div className="flex h-full">
    <button aria-label={icon} className={clsx('flex items-center justify-center', cell, pressed && 'border border-black bg-[#2b2b2b]')}>
      <Icon name={icon} className="h-[19px] w-[19px]" />
    </button>
    {caret && (
      <button aria-label={`${icon} options`} className={clsx('flex items-center justify-center', caret, pressed && 'border border-l-0 border-[#2b2b2b]')}>
        <Caret className={dim ? 'text-[#8a8a8a]' : 'text-white'} />
      </button>
    )}
  </div>
);

const Grip = () => <div className="my-0.5 ml-[3px] w-0 self-stretch border-l-2 border-dotted border-[#c8c8c8]" />;

const menus = ['File', 'Edit', 'View', 'Insert', 'Tools', 'Simulation', 'Window'];

const TitleBar = () => (
  <header className="flex h-[41px] shrink-0 items-center border-y border-[#b9bcbc]">
    <div className="flex w-[146px] items-center gap-1 pl-1">
      <svg viewBox="0 0 22 22" className="h-[22px] w-[22px]" fill="none" stroke="#f4f4f4" strokeWidth="1.500" aria-hidden="true">
        <path d="M6 1.500c3-.8 6-.6 6 1s-3 3.500-6 4.500c4-.5 5.500 1 4 3.500" />
        <path d="M1 20.500c1-3 3-6 5-9.500 5-1.500 7 1 5.500 4S6 20 1 20.500z" />
        <path d="M21 8.500c-4-1-7-.5-7 1.500s5 3 4 6-4 4-7 4" strokeWidth="2.400" />
      </svg>
      <span className="font-['Lato'] text-[14px] leading-4 text-[#f4f4f4] italic">
        <span className="font-black">SOLID</span>
        <span className="font-light">WORKS</span>
      </span>
    </div>
    <nav className="flex w-[383px] items-center gap-4 pt-0.5 text-[13px]">
      {menus.map((m) => (
        <button key={m}>{m}</button>
      ))}
      <Pin className="mb-1 -ml-1 h-4 w-4 rotate-45" fill="white" />
    </nav>
    <div className="flex h-full items-center border-l border-[#7d7d7d] py-[3px] pl-[17px]">
      <Tool icon="home" cell="w-[34px]" />
      <Tool icon="newDoc" cell="w-[31px]" caret="w-4" />
      <Tool icon="open" cell="w-[31px]" caret="w-4" />
      <Tool icon="save" cell="w-[31px]" caret="w-4" />
      <Tool icon="print" cell="w-[31px]" caret="w-4" />
      <Tool icon="undo" cell="w-[31px]" caret="w-4" dim />
      <Tool icon="redo" cell="w-[31px]" caret="w-4" dim />
      <Tool icon="cursor" cell="w-8" caret="w-3.5" pressed />
      <Tool icon="traffic" cell="w-[34px]" />
      <Tool icon="list" cell="w-[33px]" />
      <Tool icon="gear" cell="w-[31px]" caret="w-4" />
      <Tool icon="rebuild" cell="w-8" />
    </div>
    <h1 className="flex-1 pt-0.5 text-center text-[13px] text-[#c8c8c8]">turbine</h1>
    <label className="flex h-[29px] w-[251px] items-center border border-[#c8c8c8] bg-white px-1.5">
      <svg viewBox="0 0 18 18" className="h-[18px] w-[18px] shrink-0" aria-hidden="true">
        <rect width="18" height="18" rx="1.500" fill="#2b2b2b" />
        <path d="m4 4 5 4.500L4 13M10 14h5" fill="none" stroke="#fff" strokeWidth="1.500" />
      </svg>
      <input
        type="text"
        aria-label="Search Commands"
        placeholder="Search Commands"
        className="ml-2 min-w-0 flex-1 bg-transparent pt-0.5 text-[13px] text-[#333] outline-none placeholder:text-[#5c5c5c]"
      />
      <Search className="mr-2 h-[18px] w-[18px] text-[#808080]" strokeWidth={1.8} />
      <Caret className="text-[#777]" />
    </label>
    <div className="mr-1 ml-1 flex items-center">
      <button aria-label="Account" className="flex w-[41px] justify-center">
        <CircleUserRound className="h-5 w-5" strokeWidth={1.5} />
      </button>
      <button aria-label="Help" className="flex w-[41px] justify-center">
        <CircleHelp className="h-5 w-5" strokeWidth={1.8} />
      </button>
      <button aria-label="Minimize" className="flex h-5 w-[41px] items-end justify-center pb-[3px]">
        <span className="h-0.5 w-2.5 bg-white" />
      </button>
      <button aria-label="Restore" className="flex w-[41px] justify-center">
        <svg viewBox="0 0 16 16" className="h-4 w-4" fill="none" stroke="#fff" strokeWidth="1.400" aria-hidden="true">
          <path d="M1 6h9v8H1z" />
          <path d="M6 6V2h9v7h-5" />
          <path d="M6 2h9M1 6h9" strokeWidth="2" />
        </svg>
      </button>
      <button aria-label="Close" className="flex w-[41px] justify-center">
        <X className="h-4 w-4" strokeWidth={2.6} />
      </button>
    </div>
  </header>
);

const Toolbars = () => (
  <>
    <div className="flex h-[31px] w-[211px] shrink-0 items-center border-r border-[#7d7d7d]">
      <Grip />
      <div className="ml-2 flex h-full items-center">
        {['plane', 'axis', 'csys', 'point', 'com', 'bbox', 'mate'].map((n) => (
          <Tool key={n} icon={n} />
        ))}
      </div>
    </div>
    <div className="flex h-[33px] w-[349px] shrink-0 items-center border-t border-r border-[#7d7d7d]">
      <Grip />
      <div className="ml-2 flex h-[26px] items-center">
        <Tool icon="comb" />
        <Tool icon="drill" />
        <Tool icon="cogs" pressed />
        <Tool icon="bracket" />
        <Tool icon="rainbow" cell="w-8 pr-1.5" caret="w-3.5" pressed />
        <Tool icon="bolt" />
        <Tool icon="dims" />
        <Tool icon="flow" cell="w-8 pr-1.5" caret="w-3.5" pressed />
        <Tool icon="plm" caret="w-[23px]" />
        <Tool icon="swPump" cell="w-[22px]" />
      </div>
    </div>
  </>
);

interface BigProps {
  icon: string;
  lines: string[];
  width: string;
  menu?: boolean;
  disabled?: boolean;
}

const Big = ({ icon, lines, width, menu, disabled }: BigProps) => (
  <button disabled={disabled} className={clsx('flex h-full flex-col items-center pt-1.5 whitespace-nowrap', width, disabled && 'text-[#8d8d8d]')}>
    <Icon name={icon} className="h-[19px] w-[19px]" />
    <span className="mt-0.5 flex h-[38px] flex-col leading-[19px]">
      {lines.map((l) => (
        <span key={l}>{l}</span>
      ))}
    </span>
    {menu && <Caret className="mt-0.5" />}
  </button>
);

const SmallList = ({ items, width }: { items: [string, string][]; width: string }) => (
  <div className={clsx('flex flex-col pt-0.5 pl-0.5 whitespace-nowrap', width)}>
    {items.map(([icon, label]) => (
      <button key={label} className="flex h-[26px] items-center gap-1.5 text-left">
        <Icon name={icon} />
        {label}
      </button>
    ))}
  </div>
);

const Sep = () => <div className="my-0.5 w-px shrink-0 bg-[#7d7d7d]" />;

const Ribbon = () => (
  <div className="flex h-[82px] shrink-0 border-t border-[#b9bcbc] pl-1 text-[13px]">
    <Big icon="extrude" lines={['Extruded', 'Boss/Base']} width="w-[72px]" />
    <Big icon="revolve" lines={['Revolved', 'Boss/Base']} width="w-[72px]" />
    <SmallList
      width="w-[163px]"
      items={[['sweep', 'Swept Boss/Base'], ['loft', 'Lofted Boss/Base'], ['boundary', 'Boundary Boss/Base']]}
    />
    <Sep />
    <Big icon="extrudeCut" lines={['Extruded', 'Cut']} width="w-[66px]" />
    <Big icon="holeWizard" lines={['Hole Wizard']} width="w-[82px]" menu />
    <Big icon="revolveCut" lines={['Revolved', 'Cut']} width="w-[66px]" />
    <SmallList
      width="w-[124px]"
      items={[['sweepCut', 'Swept Cut'], ['loftCut', 'Lofted Cut'], ['boundaryCut', 'Boundary Cut']]}
    />
    <Sep />
    <Big icon="fillet" lines={['Fillet']} width="w-[40px]" menu />
    <Big icon="pattern" lines={['Linear Pattern']} width="w-[94px]" menu />
    <SmallList width="w-[69px]" items={[['rib', 'Rib'], ['draft', 'Draft'], ['shell', 'Shell']]} />
    <SmallList width="w-[93px]" items={[['wrap', 'Wrap'], ['intersect', 'Intersect'], ['mirror', 'Mirror']]} />
    <Sep />
    <Big icon="refGeo" lines={['Referenc...']} width="w-[74px]" menu />
    <Big icon="curves" lines={['Curves']} width="w-[51px] pr-1" menu />
    <Sep />
    <Big icon="instant" lines={['Instant3D']} width="w-[73px]" />
    <Sep />
    <Big icon="pan" lines={['Pan']} width="w-[36px]" />
    <Big icon="rotate" lines={['Rotate', 'View']} width="w-[46px]" />
    <Big icon="thread" lines={['Thread']} width="w-[56px]" />
    <Big icon="normal" lines={['Normal', 'To']} width="w-[50px]" />
    <Big icon="tile" lines={['Tile', 'Horizontally']} width="w-[88px]" />
    <Big icon="copy" lines={['Copy']} width="w-[38px]" disabled />
    <Big icon="move" lines={['Move/Copy', 'Bodies']} width="w-[86px]" />
    <button aria-label="Collapse ribbon" className="mr-2 mb-2 ml-auto self-end">
      <svg viewBox="0 0 10 8" className="h-2 w-2.5" aria-hidden="true">
        <path d="m1 7 4-5 4 5" fill="none" stroke="#fff" strokeWidth="2" />
      </svg>
    </button>
  </div>
);

const ribbonTabs: [string, string][] = [
  ['Features', 'w-[80px]'],
  ['Sketch', 'w-[62px]'],
  ['Surfaces', 'w-[75px]'],
  ['Weldments', 'w-[94px]'],
  ['Direct Editing', 'w-[109px]'],
  ['Markup', 'w-[70px]'],
  ['Evaluate', 'w-[74px]'],
  ['MBD Dimensions', 'w-[136px]'],
  ['SOLIDWORKS Add-Ins', 'w-[173px]'],
  ['Simulation', 'w-[91px]'],
  ['MBD', 'w-[56px]'],
  ['SOLIDWORKS CAM', 'w-[157px]'],
  ['SOLIDWORKS CAM TBM', 'w-[188px]'],
  ['Analysis Preparation', 'w-[158px]'],
  ['Flow Simulation', 'w-[128px]'],
];

const TabRow = () => {
  const [active, setActive] = useState('Features');
  return (
    <div className="flex h-[29px] shrink-0 text-[14px] whitespace-nowrap">
      {ribbonTabs.map(([label, width]) => (
        <button
          key={label}
          onClick={() => setActive(label)}
          className={clsx('border-r border-b border-[#858585]', width, active === label ? 'bg-[#4a4a4a] pt-px font-bold' : 'border-t bg-[#323232]')}
        >
          {label}
        </button>
      ))}
      <div className="flex h-6 flex-1 items-center border-t border-b-2 border-t-[#858585] border-b-[#1a1a1a] bg-[#a9abae] pr-1 pl-6">
        <h2 className="flex-1 text-[14px] font-bold text-[#efefef]">SOLIDWORKS Resources</h2>
        <Settings className="mr-1.5 h-4 w-4 text-[#333]" fill="#e4e4e4" strokeWidth={2.2} />
        <Pin className="h-3.5 w-3.5 rotate-45 text-[#333]" fill="#333" />
      </div>
    </div>
  );
};

const treeItems: [string, string, boolean][] = [
  ['folder', 'Folder', true],
  ['sensors', 'Sensors', false],
  ['annotations', 'Annotations', true],
  ['bodies', 'Solid Bodies(1)', true],
  ['material', 'Material <not specified>', false],
  ['planeGray', 'Front Plane', false],
  ['planeGray', 'Top Plane', false],
  ['planeGray', 'Right Plane', false],
  ['origin', 'Origin', false],
  ['planeGray', 'Plane1', false],
  ['loft', 'Surface-Loft1', true],
  ['trim', 'Surface-Trim1', true],
  ['thicken', 'Thicken1', false],
  ['extrude', 'Boss-Extrude1', true],
  ['fillet', 'Fillet1', false],
  ['circ', 'CirPattern4', false],
  ['combine', 'Combine1', false],
  ['extrudeCut', 'Cut-Extrude1', true],
];

const FeaturePanel = () => (
  <aside className="relative flex w-[273px] shrink-0 flex-col border-r border-l border-r-[#858585] border-l-[#b9b9b9]">
    <div className="mt-1 mr-0.5 flex h-[21px] items-center justify-center border-y border-[#858585]">
      <span className="h-2 w-2 rounded-full border border-[#999] bg-[#ddd]" />
    </div>
    <div className="mt-1 mr-0.5 flex h-[26px] overflow-hidden border-t border-[#858585]">
      <button aria-label="Feature tree" className="flex w-10 items-center justify-center border-r border-[#858585]">
        <Icon name="part" />
      </button>
      {['props', 'tree', 'target', 'ball'].map((n) => (
        <button key={n} aria-label={n} className="flex w-10 items-center justify-center border-r border-b border-[#858585] bg-[#323232]">
          <Icon name={n} className="h-[19px] w-[19px]" />
        </button>
      ))}
      <button aria-label="cam" className="flex flex-1 items-center overflow-hidden border-b border-[#858585] bg-[#323232] pl-2.5">
        <Icon name="cam" />
      </button>
      <div className="mt-0.5 flex h-6 w-[44px] gap-px bg-[#ccc]">
        <button aria-label="Scroll tabs left" className="flex flex-1 items-center justify-center bg-[#f5f5f5]">
          <svg viewBox="0 0 4 8" className="h-2 w-1"><path d="M4 0v8L0 4z" fill="#000" /></svg>
        </button>
        <button aria-label="Scroll tabs right" className="flex flex-1 items-center justify-center bg-[#f5f5f5]">
          <svg viewBox="0 0 4 8" className="h-2 w-1"><path d="M0 0v8l4-4z" fill="#000" /></svg>
        </button>
      </div>
    </div>
    <label className="mr-1 ml-1 flex h-8 items-center border border-[#858585] bg-[#565656] px-0.5">
      <Icon name="filter" className="h-[18px] w-[18px]" />
      <input type="text" aria-label="Filter tree" className="min-w-0 flex-1 bg-transparent px-1 text-[14px] outline-none" />
    </label>
    <ul className="mr-0.5 overflow-hidden text-[15px] whitespace-nowrap">
      <li>
        <button className="flex h-6 items-center gap-[3px] pl-[3px]">
          <Icon name="part" />
          <span>turbine (Default) &lt;&lt;Default&gt;_Display</span>
        </button>
      </li>
      {treeItems.map(([icon, label, open]) => (
        <li key={label}>
          <button className="flex h-6 items-center pl-[9px]">
            <svg viewBox="0 0 5 8" className="mr-3 h-2 w-[5px]" aria-hidden="true">
              {open && <path d="M0 0v8l5-4z" fill="#fff" />}
            </svg>
            <Icon name={icon} className="h-[19px] w-[19px]" />
            <span className="ml-1">{label}</span>
          </button>
        </li>
      ))}
    </ul>
    <div className="mr-0.5 h-1 bg-[#358cc8]" />
    <div className="mt-auto mr-0.5 flex h-[21px] items-center bg-[#f0f0f0] pl-[21px]">
      <span className="h-[3px] w-[182px] rounded-full bg-[#858585]" />
    </div>
    <div className="mt-[3px] h-0.5 border-t border-[#858585]" />
    <button aria-label="Collapse panel" className="absolute top-[371px] left-[271px] z-10 flex h-[49px] w-3 items-center justify-center border border-l-0 border-[#858585] bg-[#4a4a4a]">
      <span className="h-2 w-2 rounded-full border border-[#999] bg-[#ddd]" />
    </button>
  </aside>
);

const Turbine = () => (
  <svg viewBox="626 376 640 500" className="h-[500px] w-[640px] shrink-0 overflow-visible" role="img" aria-label="turbine">
    <defs>
      <filter id="soft" x="-20%" y="-20%" width="140%" height="140%">
        <feGaussianBlur stdDeviation="12" />
      </filter>
      <linearGradient id="bore" x1="0" x2="1" y1="0" y2="0">
        <stop offset="0" stopColor="#0e2a80" />
        <stop offset=".55" stopColor="#0c246f" />
        <stop offset="1" stopColor="#06103a" />
      </linearGradient>
      <linearGradient id="hub" x1="0" x2="1" y1="0" y2="0">
        <stop offset="0" stopColor="#06113c" />
        <stop offset=".3" stopColor="#0a1f62" />
        <stop offset=".75" stopColor="#0c2678" />
        <stop offset="1" stopColor="#0b2270" />
      </linearGradient>
      <linearGradient id="back" x1="0" x2="0" y1="0" y2="1">
        <stop offset="0" stopColor="#1535a6" />
        <stop offset="1" stopColor="#112d92" />
      </linearGradient>
      <linearGradient id="front" x1="0" x2="1" y1="0" y2="1">
        <stop offset="0" stopColor="#1538ae" />
        <stop offset=".6" stopColor="#173ab5" />
        <stop offset="1" stopColor="#12339f" />
      </linearGradient>
      <linearGradient id="right" x1="0" x2="1" y1="0" y2="1">
        <stop offset="0" stopColor="#0a1e60" />
        <stop offset="1" stopColor="#102b8e" />
      </linearGradient>
    </defs>
    <g filter="url(#soft)" fill="#3c3c3c">
      <path d="M1000 590 1060 545Q1085 540 1100 550L1180 582Q1242 604 1238 618 1232 634 1200 642L1090 668Q1030 688 1000 688z" />
      <path d="M980 722Q1000 690 1040 702L1190 745Q1220 762 1206 784L1135 844Q1110 866 1084 862 1050 856 1038 832L1008 765Q996 744 980 740z" />
      <path d="M656 780Q656 758 700 748L840 720 895 737 860 830Q845 848 820 848 780 844 752 828L686 802Q660 792 656 780z" />
      <path d="M890 736 1000 734 1000 744 890 746z" opacity=".55" />
    </g>
    <g stroke="#050a1c" strokeWidth="1.500" strokeLinejoin="round">
      <path d="M909 540C906 536 905 532 903 526L857 425C851 408 838 400 820 400 797 400 777 413 766 431L738 483 701 551C691 568 684 590 688 616L760 650 880 640z" fill="url(#back)" />
      <path d="M873 577V663A73.500 42 0 0 0 1020 663V577z" fill="url(#hub)" />
      <ellipse cx="946.500" cy="577" rx="73.500" ry="42" fill="#1538ae" />
      <ellipse cx="946.500" cy="577" rx="67" ry="38.500" fill="url(#bore)" />
      <path d="M1020 567C1050 540 1075 525 1113 510 1145 496 1180 485 1211 479 1224 477 1231 482 1229 490 1223 499 1208 506 1193 513L1130 544 1062 575C1042 582 1025 590 1020 608z" fill="#12318f" />
      <path d="M1020 567C1050 540 1075 525 1113 510 1145 496 1180 485 1211 479 1224 477 1229 480 1228 484 1222 494 1208 502 1193 509L1130 540 1060 571C1040 579 1024 588 1020 602z" fill="url(#right)" />
      <path d="M939 640C960 641 1004 642 1024 653L1113 705 1207 754 1205 758C1190 752 1160 744 1130 741 1095 735 1062 722 1042 711L1009 683 988 661C975 650 960 645 939 643z" fill="#12318f" />
      <path d="M950 641C970 641 1004 642 1024 653L1113 705 1206 753C1190 747 1160 740 1130 737 1095 731 1064 718 1044 707L1012 680 991 658C978 647 966 643 950 641z" fill="url(#right)" />
      <path d="M689 616C674 618 664 632 664 649 664 668 672 678 683 690 697 705 710 716 722 728 736 742 750 757 762 771L788 808C802 826 818 836 836 835z" fill="#050d30" strokeWidth="2" />
      <path d="M922 703C930 696 948 697 955 703 945 706 930 705 922 703z" fill="#0a1f62" />
      <path d="M689 616 844 619C860 617 871 608 873 600 872 615 878 625 885 636 905 667 930 684 955 704 945 697 930 698 921 703 908 711 904 716 901 723L885 760 861 815C855 828 847 834 834 834 815 832 800 822 789 806L764 768C752 753 738 738 724 724 712 712 698 702 686 689 672 674 665 660 666 646 668 628 676 618 689 616z" fill="url(#front)" />
      <path d="M955 704C946 700 935 701 926 704" fill="none" />
    </g>
  </svg>
);

const viewTools: [string, boolean][] = [
  ['zoomFit', false],
  ['zoomArea', false],
  ['prevView', false],
  ['section', false],
  ['annoView', false],
  ['orient', true],
  ['display', true],
  ['eye', true],
  ['ballPencil', false],
  ['ballScene', true],
  ['monitor', true],
];

const paneTabs = ['home', 'books', 'openFolder', 'palette', 'ball', 'props'];

const Canvas = () => (
  <main className="relative flex flex-1 items-center justify-center overflow-hidden bg-white">
    <Turbine />
    <div className="absolute inset-x-0 top-[5px] flex items-center justify-center gap-1.5 pr-0.5">
      {viewTools.map(([icon, menu]) => (
        <button key={icon} aria-label={icon} className="flex items-center gap-2">
          <Icon name={icon} className="h-[19px] w-5" />
          {menu && <Caret className="text-[#8a8a8a]" />}
        </button>
      ))}
    </div>
    <div className="absolute top-[54px] right-0 flex w-[33px] flex-col border-t border-l border-[#858585]">
      {paneTabs.map((n, i) => (
        <button key={n} aria-label={n} className={clsx('flex h-[30px] items-center justify-center border-b border-[#858585]', i === 0 ? 'bg-[#b4b4b4]' : 'bg-[#323232]')}>
          <Icon name={n} className="h-[18px] w-[18px]" />
        </button>
      ))}
    </div>
    <div className="absolute -bottom-px left-3">
      <svg viewBox="0 0 76 70" className="h-[70px] w-[76px]" aria-hidden="true">
        <path d="M39 44 17 56" stroke="#1a1ab0" strokeWidth="5" />
        <path d="M39 44 61 56" stroke="#c01818" strokeWidth="5" />
        <path d="M39 44V22" stroke="#1a5c1a" strokeWidth="5" />
        <path d="M39 12 33 22q6 5 12 0z" fill="#2c8a2c" stroke="#134a13" strokeWidth=".6" />
        <path d="m11 60 7-9 6 9z" fill="#3a3af0" stroke="#10106e" strokeWidth=".6" />
        <path d="m66 60-7-9-6 8z" fill="#e23030" stroke="#7d0f0f" strokeWidth=".6" />
        <g fontFamily="Liberation Sans" fontSize="13">
          <text x="34" y="11" fill="#128a12">Y</text>
          <text x="4" y="66" fill="#1414e0">Z</text>
          <text x="64" y="66" fill="#e81414">X</text>
        </g>
      </svg>
      <p className="mt-[18px] font-['Lato'] text-[18px] leading-6 font-bold text-[#111]">*Isometric</p>
    </div>
  </main>
);

const SheetTabs = () => (
  <div className="flex h-5 shrink-0 border-t border-[#858585] text-[15px] leading-4">
    <div className="w-[27px] bg-[#b4b4b4]" />
    <div className="flex w-[81px] border-t border-black bg-[#b0b0c0]">
      {['M3 2v10M12 2v10L5 7z', 'M10 2v10L3 7z', 'M4 2v10l7-5z', 'M11 2v10M3 2v10l7-5z'].map((d) => (
        <button key={d} aria-label="Sheet navigation" className="flex w-5 items-center justify-center border border-[#8d8da5] bg-[#a5a5bd]">
          <svg viewBox="0 0 14 14" className="h-3.5 w-3.5">
            <path d={d} fill="#85859c" stroke="#85859c" />
          </svg>
        </button>
      ))}
    </div>
    <button className="w-[76px] border-r border-[#858585] pb-0.5 pl-1 font-bold">Model</button>
    <button className="w-[89px] border-r border-[#858585] bg-[#323232] pb-0.5">3D Views</button>
    <button className="w-[144px] border-r border-[#858585] bg-[#323232] pr-3 pb-0.5">Motion Study 1</button>
  </div>
);

const Chevrons = ({ down }: { down?: boolean }) => (
  <svg viewBox="0 0 14 10" className={clsx('h-2.5 w-3.5', down && 'rotate-180')} fill="none" aria-hidden="true">
    <path d="m1.500 5 5.500-3.500L12.500 5M3 8.500l4-3 4 3" stroke="#9c9c9c" strokeWidth="3" strokeLinecap="round" />
    <path d="m1.500 5 5.500-3.500L12.500 5M3 8.500l4-3 4 3" stroke="#5c5c5c" strokeWidth="1" strokeLinecap="round" />
  </svg>
);

interface SectionProps {
  title: string;
  items?: [string, string][];
}

const Section = ({ title, items }: SectionProps) => (
  <section className="mr-[29px] ml-[11px] border-t border-[#858585]">
    <button className="flex h-[25px] w-full items-center justify-between pr-[7px] pl-1 text-[13px] font-bold">
      {title}
      <Chevrons down={!items} />
    </button>
    {items?.map(([icon, label]) => (
      <a key={label} href="#" className="flex h-8 items-center gap-1 pl-0.5">
        <Icon name={icon} className="mb-0.5 h-5 w-5" />
        {label}
      </a>
    ))}
  </section>
);

const ResourcePane = () => (
  <aside className="flex w-[300px] shrink-0 flex-col border-l border-[#858585] text-[13px]">
    <div className="flex flex-1 flex-col border-l-4 border-[#b4b4b4]">
      <a href="#" className="mt-8 ml-3 flex h-6 items-center gap-[5px]">
        <Icon name="home" className="mb-1 h-[18px] w-[18px]" />
        Welcome to SOLIDWORKS
      </a>
      <div className="mt-[30px]">
        <Section
          title="SOLIDWORKS Tools"
          items={[
            ['swTab', 'Property Tab Builder'],
            ['swRx', 'SOLIDWORKS Rx'],
            ['swRx', 'Performance Benchmark Test'],
            ['compare', 'Compare My Score'],
            ['wizard', 'SOLIDWORKS Settings Wizard'],
            ['swUser', 'My Products'],
          ]}
        />
      </div>
      <div className="mt-7">
        <Section title="Online Resources" items={[['compass', '3DEXPERIENCE Marketplace'], ['shake', 'Partner Solutions']]} />
      </div>
      <div className="mt-7">
        <Section title="Subscription Services" />
      </div>
    </div>
  </aside>
);

const StatusBar = () => (
  <footer className="flex h-[23px] shrink-0 items-center border-t border-b border-t-[#858585] border-b-black pt-0.5 pl-px text-[14px]">
    <span>SOLIDWORKS Premium 2024 SP1.0</span>
    <span className="ml-auto w-[103px]">Editing Part</span>
    <Icon name="warnPart" className="h-4 w-[18px]" />
    <button className="ml-[81px] flex items-center">
      <span className="w-[70px] text-left">MMGS</span>
      <Caret className="rotate-180" />
    </button>
    <Icon name="tag" className="mr-0.5 ml-[26px] h-4 w-4" />
  </footer>
);

export default function App() {
  return (
    <div className="flex h-screen flex-col overflow-hidden bg-[#4a4a4a] font-['Open_Sans','Noto_Sans',sans-serif] text-[#f0f0f0]">
      <TitleBar />
      <Toolbars />
      <Ribbon />
      <TabRow />
      <div className="flex min-h-0 flex-1">
        <div className="flex min-w-0 flex-1 flex-col">
          <div className="flex min-h-0 flex-1">
            <FeaturePanel />
            <Canvas />
          </div>
          <SheetTabs />
        </div>
        <ResourcePane />
      </div>
      <StatusBar />
    </div>
  );
}
